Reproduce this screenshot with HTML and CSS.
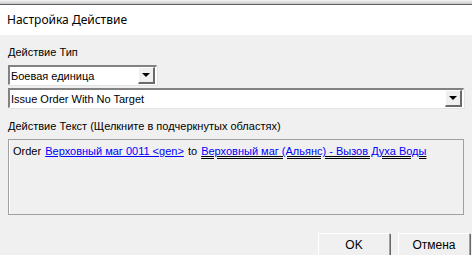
FILE: index.html
```html
<!DOCTYPE html>
<html lang="ru">
<head>
    <meta charset="UTF-8">
    <title>Настройка Действие</title>
    <link rel="stylesheet" href="styles.css">
</head>
<body>
    <div class="window">
        <div class="edge"></div>
        <div class="titlebar">Настройка Действие</div>

        <div class="content">
            <div class="label">Действие Тип</div>
            <div class="combo combo-short">
                <span class="combo-value">Боевая единица</span>
                <span class="combo-btn"><span class="arrow"></span></span>
            </div>
            <div class="combo combo-wide">
                <span class="combo-value">Issue Order With No Target</span>
                <span class="combo-btn"><span class="arrow"></span></span>
            </div>

            <div class="label label-text">Действие Текст (Щелкните в подчеркнутых областях)</div>
            <div class="textbox">
                Order <a class="link">Верховный маг 0011 &lt;gen&gt;</a> to <a class="link link-focus">Верховный маг (Альянс) - Вызов Духа Воды</a>
            </div>

            <div class="buttons">
                <button class="btn">OK</button>
                <button class="btn">Отмена</button>
            </div>
        </div>
    </div>
</body>
</html>
```

FILE: styles.css
```css
body {
    margin: 0;
    background: #f0f0f0;
    font-family: Tahoma, "Liberation Sans", sans-serif;
    font-size: 11px;
    color: #000;
}

.window {
    width: 472px;
    height: 255px;
    overflow: hidden;
}

.edge {
    height: 4px;
    background: linear-gradient(#f4f4f4, #c8c8c8);
    border-bottom: 1px solid #5f5f5f;
}

.titlebar {
    height: 30px;
    line-height: 30px;
    background: #fff;
    padding-left: 7px;
    font-family: "Noto Sans", "Liberation Sans", sans-serif;
    font-size: 12px;
}

.content {
    padding: 11px 8px 0 8px;
}

.label {
    height: 13px;
    line-height: 13px;
    margin-bottom: 6px;
}

.combo {
    display: flex;
    align-items: center;
    height: 20px;
    box-sizing: border-box;
    background: #fff;
    border-style: solid;
    border-width: 2px 1px 1px 2px;
    border-color: #828282 #fff #fff #828282;
    box-shadow: 1px 1px 0 #e3e3e3;
}

.combo-short {
    width: 149px;
    margin-bottom: 3px;
}

.combo-wide {
    width: 456px;
}

.combo-value {
    flex: 1;
    padding-left: 1px;
    line-height: 16px;
}

.combo-btn {
    width: 14px;
    height: 14px;
    margin-right: 1px;
    background: #f0f0f0;
    border-style: solid;
    border-width: 1px 2px 2px 1px;
    border-color: #fff #6a6a6a #6a6a6a #fff;
    display: flex;
    align-items: center;
    justify-content: center;
}

.arrow {
    width: 0;
    height: 0;
    border-left: 4px solid transparent;
    border-right: 4px solid transparent;
    border-top: 4px solid #000;
}

.label-text {
    margin-top: 12px;
    margin-bottom: 6px;
}

.textbox {
    width: 456px;
    height: 76px;
    box-sizing: border-box;
    border: 1px solid #a0a0a0;
    box-shadow: inset 1px 0 0 #fff;
    padding: 3px 4px;
    line-height: 16px;
}

.link {
    color: #0000ff;
    text-decoration: underline;
    margin: 0 1px;
}

.link-focus {
    text-decoration: underline double #000;
}

.buttons {
    display: flex;
    justify-content: flex-end;
    gap: 8px;
    margin-top: 18px;
    margin-right: -6px;
}

.btn {
    width: 72px;
    height: 23px;
    font-family: inherit;
    font-size: 12px;
    background: #f0f0f0;
    border-style: solid;
    border-width: 1px;
    border-color: #fff #a0a0a0 #a0a0a0 #fff;
    box-shadow: 1px 1px 0 #696969;
    padding: 0;
}
```
